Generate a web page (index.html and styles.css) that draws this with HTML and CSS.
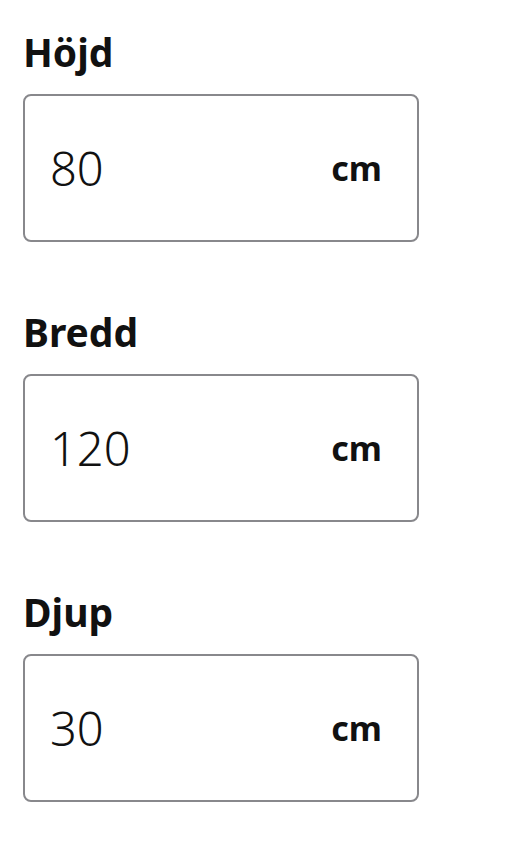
FILE: index.html
```html
<!DOCTYPE html>
<html lang="sv">
<head>
<meta charset="utf-8">
<link rel="stylesheet" href="styles.css">
</head>
<body>
<div class="form">
  <div class="field">
    <label class="label">Höjd</label>
    <div class="box"><span class="value">80</span><span class="unit">cm</span></div>
  </div>
  <div class="field">
    <label class="label">Bredd</label>
    <div class="box"><span class="value">120</span><span class="unit">cm</span></div>
  </div>
  <div class="field">
    <label class="label">Djup</label>
    <div class="box"><span class="value">30</span><span class="unit">cm</span></div>
  </div>
</div>
</body>
</html>
```
FILE: styles.css
```css
html, body {
  margin: 0;
  padding: 0;
  background: #ffffff;
}
body {
  font-family: "Noto Sans", "Open Sans", sans-serif;
  color: #111111;
}
.form {
  display: flex;
  flex-direction: column;
  gap: 66px;
  padding: 28px 0 0 23px;
}
.field {
  display: flex;
  flex-direction: column;
  gap: 18px;
}
.label {
  font-size: 39px;
  line-height: 48px;
  font-weight: 700;
}
.box {
  box-sizing: border-box;
  width: 396px;
  height: 148px;
  border: 2px solid #88888c;
  border-radius: 8px;
  display: flex;
  align-items: center;
  justify-content: space-between;
  padding: 0 35px 0 25px;
}
.value {
  font-size: 47px;
  font-weight: 350;
}
.unit {
  font-size: 34px;
  font-weight: 700;
}
```
